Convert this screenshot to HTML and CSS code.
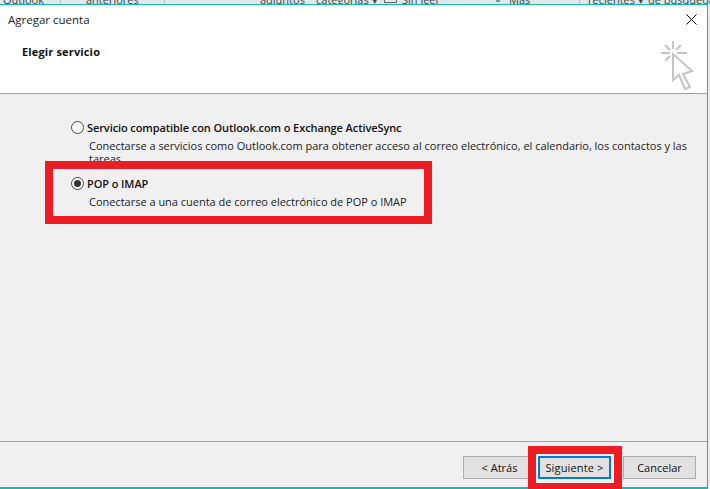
FILE: index.html
```html
<!DOCTYPE html>
<html lang="es">
<head>
<meta charset="utf-8">
<title>Agregar cuenta</title>
<link rel="stylesheet" href="styles.css">
</head>
<body>
<div class="ribbon">
  <div class="col c1"><span class="rib">Outlook</span></div>
  <div class="col c2"><span class="rib">anteriores</span></div>
  <div class="col c3"><span class="rib">adjuntos</span></div>
  <div class="col c4"><span class="rib">categorías ▾</span></div>
  <div class="col c5"><span class="box"></span></div>
  <div class="col c6"><span class="rib">Sin leer</span></div>
  <div class="col c7"><span class="chip"></span></div>
  <div class="col c8"><span class="rib">Más</span></div>
  <div class="col c9"><span class="rib">recientes ▾</span></div>
  <div class="col c10"><span class="rib">de búsqueda</span></div>
</div>
<div class="dialog">
  <header class="head">
    <div class="titlebar">
      <span class="title">Agregar cuenta</span>
      <svg class="close" width="11" height="11" viewBox="0 0 11 11"><path d="M.5.5l10 10M10.500.5l-10 10" stroke="#000" fill="none"/></svg>
    </div>
    <div class="subhead">
      <h1 class="subtitle">Elegir servicio</h1>
      <svg class="cursor" width="38" height="52" viewBox="0 0 38 52" fill="none" stroke="#c4c4c4" stroke-width="2">
        <path d="M15 3v8M3 15h9M19 15h10M7 7l5 5M23 7l-5 5M7 23l5-5"/>
        <path d="M15 16l19 17-9 3 7 13-5 2-6-14-6 5z"/>
      </svg>
    </div>
  </header>
  <main class="body">
    <div class="option">
      <div class="opt-title"><span class="radio"></span><b>Servicio compatible con Outlook.com o Exchange ActiveSync</b></div>
      <p class="opt-desc">Conectarse a servicios como Outlook.com para obtener acceso al correo electrónico, el calendario, los contactos y las tareas</p>
    </div>
    <div class="option second">
      <div class="opt-title"><span class="radio on"></span><b>POP o IMAP</b></div>
      <p class="opt-desc">Conectarse a una cuenta de correo electrónico de POP o IMAP</p>
    </div>
    <div class="mark mark-option"></div>
  </main>
  <footer class="foot">
    <button class="btn back">&lt; Atrás</button>
    <button class="btn next">Siguiente &gt;</button>
    <button class="btn cancel">Cancelar</button>
    <div class="mark mark-next"></div>
  </footer>
</div>
</body>
</html>
```
FILE: styles.css
```css
* { box-sizing: border-box; }
html, body { margin: 0; padding: 0; }
body {
  width: 710px; height: 489px; overflow: hidden;
  background: #ececec;
  font-family: "Open Sans", "Noto Sans", sans-serif;
  font-size: 11px; color: #111;
}
.ribbon { height: 4px; background: #e6e6e6; display: flex; overflow: hidden; }
.col { flex: none; height: 4px; overflow: hidden; white-space: nowrap; }
.rib { display: block; margin-top: -9px; font-size: 11px; line-height: 18px; color: #444; }
.c1 { width: 61px; padding-left: 3px; border-right: 1px solid #bbb; }
.c2 { width: 104px; padding-left: 25px; border-right: 1px solid #bbb; }
.c3 { width: 151px; padding-left: 95px; }
.c4 { width: 68px; }
.c5 { width: 18px; }
.c6 { width: 94px; }
.c7 { width: 13px; }
.c8 { width: 71px; border-right: 1px solid #bbb; }
.c9 { width: 68px; padding-left: 8px; }
.c10 { width: 62px; }
.box { display: block; width: 13px; height: 3px; border: 1px solid #666; border-top: 0; }
.chip { display: block; width: 4px; height: 2px; background: #6aa58c; }
.dialog {
  width: 708px; height: 485px;
  border-top: 1px solid #10bfa5; border-right: 1px solid #10bfa5; border-bottom: 2px solid #10bfa5;
  display: flex; flex-direction: column;
  background: #f0f0f0;
}
.head { height: 89px; background: #fff; border-bottom: 1px solid #a0a0a0; flex: none; }
.titlebar { display: flex; justify-content: space-between; align-items: center; padding: 0 10px 0 8px; height: 30px; }
.title { font-size: 11.500px; line-height: 16px; color: #222; }
.close { margin-bottom: 2px; }
.subhead { display: flex; justify-content: space-between; align-items: flex-start; padding: 0 11px 0 22px; }
.subtitle { margin: 9px 0 0; font-size: 11px; line-height: 16px; font-weight: 700; letter-spacing: .15px; color: #111; }
.cursor { margin-top: 3px; }
.body { flex: 1; position: relative; padding: 25px 16px 0 71px; }
.opt-title { display: flex; align-items: center; gap: 3px; height: 16px; }
.opt-title b { font-size: 11px; font-weight: 600; letter-spacing: -.09px; color: #111; }
.radio { width: 13px; height: 13px; border: 1px solid #444; border-radius: 50%; background: #fff; position: relative; flex: none; }
.radio.on::after { content: ""; position: absolute; inset: 2px; border-radius: 50%; background: #333; }
.opt-desc { margin: 4px 0 0 18px; font-size: 11px; line-height: 13px; color: #222; letter-spacing: -.01px; }
.second { margin-top: 10px; }
.mark { position: absolute; border: 8px solid #ed1c24; }
.mark-option { left: 45px; top: 67px; width: 387px; height: 63px; }
.mark-next { left: 528px; top: 4px; width: 94px; height: 44px; border-bottom-width: 7px; }
.foot {
  height: 46px; flex: none; border-top: 1px solid #a0a0a0;
  display: flex; align-items: flex-start; justify-content: flex-end;
  gap: 2px; padding: 14px 11px 0 0; position: relative;
}
.btn {
  width: 73px; height: 23px; padding: 0; background: #e1e1e1; border: 1px solid #adadad;
  font: 11px "Open Sans", "Noto Sans", sans-serif; color: #111;
}
.next { border: 2px solid #0078d7; letter-spacing: .15px; margin-right: 10px; }
```
